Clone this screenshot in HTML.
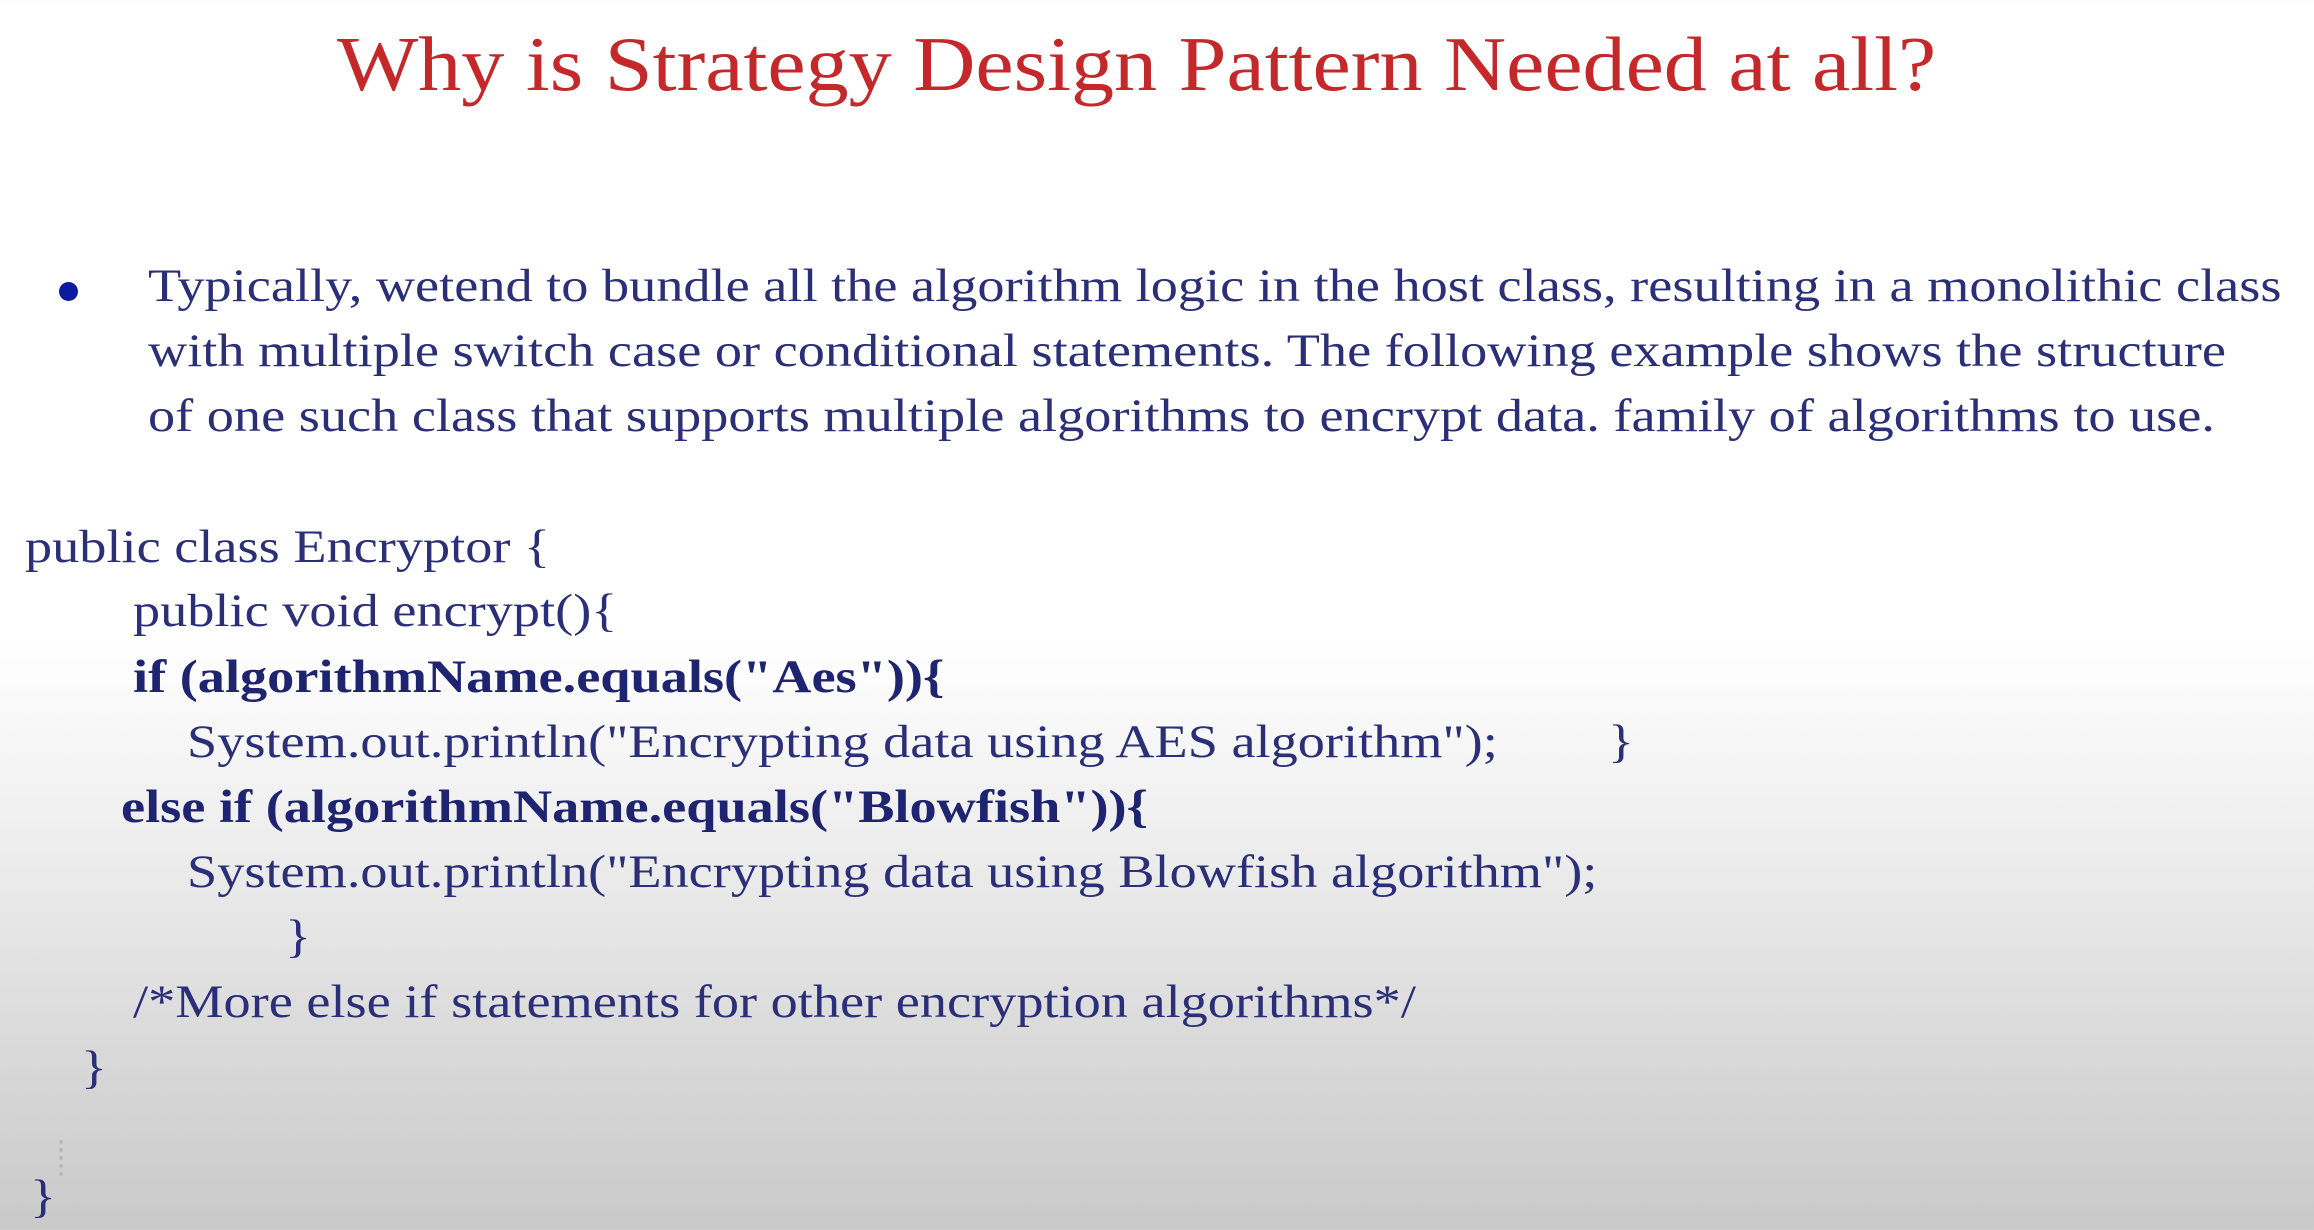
<!DOCTYPE html>
<html><head><meta charset="utf-8"><style>
html,body{margin:0;padding:0}
body{width:2314px;height:1230px;overflow:hidden;position:relative;
background:linear-gradient(to bottom,#fff 0px,#fff 640px,#ececec 860px,#d6d6d6 1080px,#c9c9c9 1230px);
font-family:"Liberation Serif",serif;color:#2b2f78}
.l{position:absolute;white-space:nowrap;line-height:1;font-size:47px;transform:scaleX(1.155);transform-origin:0 0}
.t{position:absolute;left:-20px;width:2314px;text-align:center;top:26px;font-size:77px;color:#c4282a;line-height:1;font-family:"Liberation Serif",serif;transform:scaleX(1.118);transform-origin:1160px 0}
b{font-weight:bold;color:#1f2470}
.dot{position:absolute;left:59px;top:282px;width:19px;height:19px;border-radius:50%;background:#0d1aa0}
</style></head><body>
<div class="t">Why is Strategy Design Pattern Needed at all?</div>
<div class="dot"></div>
<div class="l" style="left:148px;top:263px">Typically, wetend to bundle all the algorithm logic in the host class, resulting in a monolithic class</div>
<div class="l" style="left:148px;top:328px">with multiple switch case or conditional statements. The following example shows the structure</div>
<div class="l" style="left:148px;top:393px">of one such class that supports multiple algorithms to encrypt data. family of algorithms to use.</div>
<div class="l" style="left:25px;top:524px">public class Encryptor {</div>
<div class="l" style="left:133px;top:588px">public void encrypt(){</div>
<div class="l" style="left:133px;top:654px"><b>if (algorithmName.equals("Aes")){</b></div>
<div class="l" style="left:187px;top:719px">System.out.println("Encrypting data using AES algorithm");</div>
<div class="l" style="left:1608px;top:719px">}</div>
<div class="l" style="left:121px;top:784px"><b>else if (algorithmName.equals("Blowfish")){</b></div>
<div class="l" style="left:187px;top:849px">System.out.println("Encrypting data using Blowfish algorithm");</div>
<div class="l" style="left:285px;top:914px">}</div>
<div class="l" style="left:133px;top:979px">/*More else if statements for other encryption algorithms*/</div>
<div class="l" style="left:81px;top:1045px">}</div>
<div class="l" style="left:30px;top:1174px">}</div>
<div style="position:absolute;left:59px;top:1140px;width:5px;height:36px;border-left:4px dotted #b8b8b8"></div>
</body></html>
